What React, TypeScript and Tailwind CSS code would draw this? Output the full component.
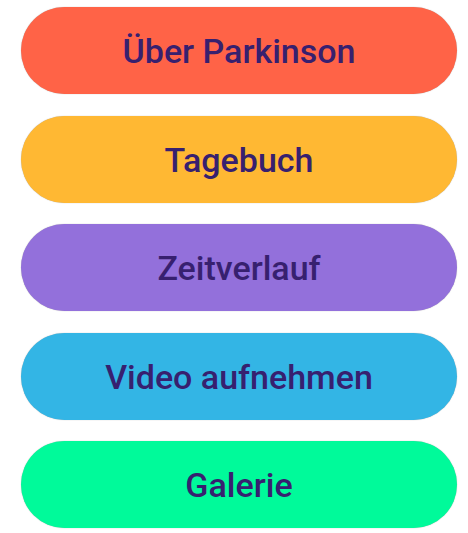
import React from 'react';

const menuItems = [
  { label: 'Über Parkinson', color: 'bg-[#ff6347]' },
  { label: 'Tagebuch', color: 'bg-[#ffb833]' },
  { label: 'Zeitverlauf', color: 'bg-[#9370db]' },
  { label: 'Video aufnehmen', color: 'bg-[#33b5e5]' },
  { label: 'Galerie', color: 'bg-[#00fa9a]' },
];

const App: React.FC = () => {
  return (
    <div className="w-[468px] h-[533px] bg-white font-['Roboto',sans-serif] pl-[21px] pr-[11px] pt-[7px] flex flex-col gap-[21.5px]">
      {menuItems.map((item) => (
        <button
          key={item.label}
          className={`${item.color} h-[87px] w-full rounded-full flex items-center justify-center pt-[2px] text-[34px] font-medium text-[#37206f] shadow-[0_0_1px_rgba(0,0,0,0.35)]`}
        >
          {item.label}
        </button>
      ))}
    </div>
  );
};

export default App;
